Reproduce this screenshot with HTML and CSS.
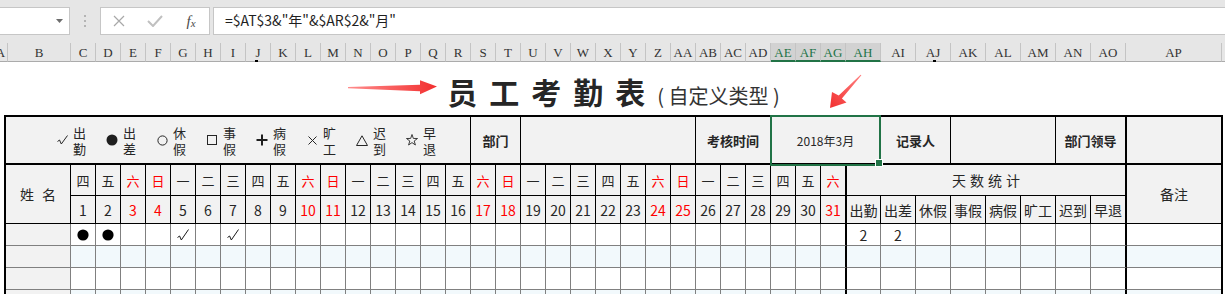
FILE: index.html
```html
<!DOCTYPE html>
<html lang="zh-CN">
	<head>
		<meta charset="UTF-8" />
		<meta name="viewport" content="width=device-width, initial-scale=1.0" />
		<title>员工考勤表</title>
		<link rel="stylesheet" href="styles.css">
	</head>
	<body>
		<div class="toolbar">
			<div class="name-box">
				<svg class="dd" width="7" height="4" viewBox="0 0 7 4"><path d="M0 0 H7 L3.5 4 Z" fill="#6d6d6d" /></svg>
			</div>
			<div class="grip"><i></i><i></i><i></i></div>
			<div class="fx-box">
				<span class="fx-btn"><svg width="12" height="12" viewBox="0 0 12 12"><path d="M1 1 L11 11 M11 1 L1 11" stroke="#a8a8a8" stroke-width="1.2" /></svg></span>
				<span class="fx-btn"><svg width="16" height="12" viewBox="0 0 16 12"><path d="M1 6 L6 11 L15 1" stroke="#c0c0c0" stroke-width="2" fill="none" /></svg></span>
				<span class="fx-btn fx">f<small>x</small></span>
			</div>
			<div class="formula">=$AT$3&amp;"年"&amp;$AR$2&amp;"月"</div>
		</div>

		<div class="col-heads" id="colHeads"></div>

		<div class="sheet">
			<div class="title-row">
				<span class="title">员工考勤表</span>
				<span class="subtitle">( 自定义类型 )</span>
			</div>

			<div class="grid" id="sheetGrid">
				<div class="c lg s17 legend">
					<div class="lg-item">
						<span class="lg-sym"><svg width="11" height="10" viewBox="0 0 11 10"><path d="M0.5 6.5 L2.5 5 L4.3 9 L10.5 0.5" fill="none" stroke="#262626" /></svg></span>
						<span class="lg-text"><b>出</b><b>勤</b></span>
					</div>
					<div class="lg-item">
						<span class="lg-sym"><svg width="12" height="12" viewBox="0 0 12 12"><circle cx="6" cy="6" r="5.5" fill="#1f1f1f" /></svg></span>
						<span class="lg-text"><b>出</b><b>差</b></span>
					</div>
					<div class="lg-item">
						<span class="lg-sym"><svg width="11" height="11" viewBox="0 0 11 11"><circle cx="5.5" cy="5.5" r="4.6" fill="none" stroke="#262626" /></svg></span>
						<span class="lg-text"><b>休</b><b>假</b></span>
					</div>
					<div class="lg-item">
						<span class="lg-sym"><svg width="10" height="10" viewBox="0 0 10 10"><rect x="0.5" y="0.5" width="9" height="9" fill="none" stroke="#262626" /></svg></span>
						<span class="lg-text"><b>事</b><b>假</b></span>
					</div>
					<div class="lg-item">
						<span class="lg-sym"><svg width="12" height="12" viewBox="0 0 12 12"><path d="M6 0.5 V11.5 M0.5 6 H11.5" stroke="#1f1f1f" stroke-width="2" /></svg></span>
						<span class="lg-text"><b>病</b><b>假</b></span>
					</div>
					<div class="lg-item">
						<span class="lg-sym"><svg width="9" height="9" viewBox="0 0 9 9"><path d="M0.5 0.5 L8.5 8.5 M8.5 0.5 L0.5 8.5" stroke="#262626" /></svg></span>
						<span class="lg-text"><b>旷</b><b>工</b></span>
					</div>
					<div class="lg-item">
						<span class="lg-sym"><svg width="12" height="11" viewBox="0 0 12 11"><path d="M6 0.8 L11.5 10.5 H0.5 Z" fill="none" stroke="#262626" /></svg></span>
						<span class="lg-text"><b>迟</b><b>到</b></span>
					</div>
					<div class="lg-item">
						<span class="lg-sym"><svg width="12" height="12" viewBox="0 0 12 12"><path d="M6 0.5 L7.35 4.44 L11.52 4.51 L8.19 7.01 L9.41 10.99 L6 8.6 L2.59 10.99 L3.81 7.01 L0.48 4.51 L4.65 4.44 Z" fill="none" stroke="#262626" stroke-width="0.9" /></svg></span>
						<span class="lg-text"><b>早</b><b>退</b></span>
					</div>
				</div>
				<div class="c lg s2 bold">部门</div>
				<div class="c lg s7"></div>
				<div class="c lg s3 bold">考核时间</div>
				<div class="c lg s4 month">2018年3月</div>
				<div class="c lg s2 bold">记录人</div>
				<div class="c lg s3"></div>
				<div class="c lg s2 bold end">部门领导</div>
				<div class="c lg last"></div>
			</div>

			<div class="sel"></div>

			<svg class="arrows" width="1225" height="60" viewBox="0 0 1225 60">
				<defs>
					<linearGradient id="redH" x1="0" y1="0" x2="1" y2="0">
						<stop offset="0" stop-color="#ff8c8c" />
						<stop offset="1" stop-color="#f22f2f" />
					</linearGradient>
					<linearGradient id="redD" x1="1" y1="0" x2="0" y2="1">
						<stop offset="0" stop-color="#ff8080" />
						<stop offset="1" stop-color="#f22f2f" />
					</linearGradient>
				</defs>
				<polygon points="348,25 420,22.7 420,18.3 437,24.5 420,32.3 420,29.3 348,26.2" fill="url(#redH)" />
				<polygon points="861.4,13.3 841.9,36.6 846.5,40.5 830,46 832,30 838.7,33.6 860.6,12.7" fill="url(#redD)" />
			</svg>
			<i class="tick-mark t1"></i>
			<i class="tick-mark t2"></i>
		</div>

		<script>
			// 列标题
			var cols = [['A', 'w8'], ['B', 'w63']];
			var letters = 'CDEFGHIJKLMNOPQRSTUVWXYZ'.split('').concat(['AA', 'AB', 'AC', 'AD', 'AE', 'AF', 'AG']);
			letters.forEach(function (l) { cols.push([l, '']); });
			['AH', 'AI', 'AJ', 'AK', 'AL', 'AM', 'AN', 'AO'].forEach(function (l) { cols.push([l, 'w35']); });
			cols.push(['AP', 'w96']);
			cols.push(['AQ', 'w96']);
			var heads = document.getElementById('colHeads');
			cols.forEach(function (c) {
				var el = document.createElement('div');
				var on = ['AE', 'AF', 'AG', 'AH'].indexOf(c[0]) > -1;
				el.className = 'ch ' + c[1] + (on ? ' on' : '');
				el.textContent = c[0];
				heads.appendChild(el);
			});

			// 表格
			var grid = document.getElementById('sheetGrid');
			function cell(cls, html) {
				var el = document.createElement('div');
				el.className = 'c ' + cls;
				el.innerHTML = html || '';
				grid.appendChild(el);
			}
			var wk = ['日', '一', '二', '三', '四', '五', '六'];
			var stats = ['出勤', '出差', '休假', '事假', '病假', '旷工', '迟到', '早退'];
			var dot = '<svg width="12" height="12" viewBox="0 0 12 12"><circle cx="6" cy="6" r="5.6" fill="#000"/></svg>';
			var tick = '<svg width="12" height="12" viewBox="0 0 12 12"><path d="M0.5 8.5 L2.6 7 L4.3 11 L11.5 0.5" fill="none" stroke="#1a1a1a"/></svg>';
			var d, w;

			// 星期行
			cell('r2 name-h', '姓名');
			for (d = 1; d <= 31; d++) {
				w = (d + 3) % 7;
				cell('wk' + (w == 0 || w == 6 ? ' red' : '') + (d == 31 ? ' end' : ''), wk[w]);
			}
			cell('s8 end sum-h', '天数统计');
			cell('r2 last', '备注');

			// 日期行
			for (d = 1; d <= 31; d++) {
				w = (d + 3) % 7;
				cell('num' + (w == 0 || w == 6 ? ' red' : '') + (d == 31 ? ' end' : ''), d);
			}
			stats.forEach(function (s, i) { cell(i == 7 ? 'end' : '', s); });

			// 数据行
			var marks = { 1: dot, 2: dot, 5: tick, 7: tick };
			for (var r = 0; r < 4; r++) {
				var alt = r % 2 ? ' alt' : '';
				cell('d nm');
				for (d = 1; d <= 31; d++) {
					cell('d' + alt + (d == 31 ? ' end' : ''), r == 0 ? marks[d] : '');
				}
				for (var i = 0; i < 8; i++) {
					cell('d' + alt + (i == 7 ? ' end' : ''), r == 0 && i < 2 ? '2' : '');
				}
				cell('d last' + alt);
			}
		</script>
	</body>
</html>
```

FILE: styles.css
```css
* {
	box-sizing: border-box;
}
body {
	margin: 0;
	width: 1225px;
	height: 294px;
	overflow: hidden;
	background: #fff;
	font-family: "Noto Sans CJK SC", "Noto Sans", sans-serif;
	color: #262626;
}

/* 编辑栏 */
.toolbar {
	height: 43px;
	background: #e6e6e6;
	display: flex;
	padding-top: 7px;
}
.name-box {
	position: relative;
	width: 70px;
	height: 28px;
	background: #fff;
	border: 1px solid #c6c6c6;
	border-left: none;
}
.name-box .dd {
	position: absolute;
	left: 56px;
	top: 11px;
}
.grip {
	width: 30px;
	height: 28px;
	display: flex;
	flex-direction: column;
	align-items: center;
	justify-content: center;
	gap: 3px;
}
.grip i {
	width: 2px;
	height: 2px;
	background: #b4b4b4;
}
.fx-box {
	width: 110px;
	height: 28px;
	background: #fff;
	border: 1px solid #c6c6c6;
	display: flex;
}
.fx-btn {
	width: 36px;
	display: flex;
	align-items: center;
	justify-content: center;
}
.fx {
	font-family: "Liberation Serif", serif;
	font-style: italic;
	font-size: 15px;
	color: #4a4a4a;
}
.fx small {
	font-size: 11px;
	margin-top: 3px;
}
.formula {
	flex: 1;
	margin-left: 3px;
	height: 28px;
	background: #fff;
	border: 1px solid #c6c6c6;
	border-right: none;
	padding-left: 11px;
	font-size: 14px;
	line-height: 25px;
	color: #1f1f1f;
}

/* 列标题 */
.col-heads {
	display: flex;
	height: 19px;
	background: #e6e6e6;
	font-family: "Liberation Serif", serif;
	font-size: 13px;
	color: #333;
}
.ch {
	flex: none;
	width: 25px;
	height: 19px;
	border-right: 1px solid #c4c4c4;
	border-bottom: 1px solid #ababab;
	text-align: center;
	line-height: 19px;
	overflow: hidden;
	white-space: nowrap;
}
.ch.w8 {
	width: 8px;
	text-indent: -6px;
}
.ch.w63 {
	width: 63px;
}
.ch.w35 {
	width: 35px;
}
.ch.w96 {
	width: 96px;
}
.ch.on {
	background: #d2d2d2;
	color: #217346;
	border-bottom: 2px solid #217346;
}

/* 表格 */
.sheet {
	position: relative;
}
.title-row {
	width: 1219px;
	height: 53px;
	margin-left: 4px;
	display: flex;
	justify-content: center;
	align-items: baseline;
	padding-top: 12px;
}
.title {
	font-size: 30px;
	font-weight: 700;
	letter-spacing: 12px;
	line-height: 34px;
	color: #262626;
}
.subtitle {
	font-size: 20px;
	line-height: 24px;
	color: #333;
}
.grid {
	display: grid;
	width: 1219px;
	margin-left: 4px;
	grid-template-columns: 65px repeat(30, 25px) 26px 34px repeat(6, 35px) 36px 94px;
	grid-template-rows: 48px 31px 28px repeat(4, 22px);
	border: 2px solid #000;
	border-bottom: none;
	font-size: 14px;
}
.c {
	display: flex;
	align-items: center;
	justify-content: center;
	border-right: 1px solid #000;
	border-bottom: 1px solid #000;
	background: #f2f2f2;
	white-space: nowrap;
}
.lg {
	border-bottom-width: 2px;
}
.s2 { grid-column: span 2; }
.s3 { grid-column: span 3; }
.s4 { grid-column: span 4; }
.s7 { grid-column: span 7; }
.s8 { grid-column: span 8; }
.s17 { grid-column: span 17; }
.r2 {
	grid-row: span 2;
}
.end {
	border-right-width: 2px;
}
.last {
	border-right: none;
}
.bold {
	font-size: 13px;
	font-weight: 700;
}
.month {
	font-size: 12px;
}
.legend {
	justify-content: flex-start;
	padding-left: 49px;
}
.lg-item {
	flex: none;
	width: 50px;
	display: flex;
	align-items: center;
}
.lg-sym {
	width: 14px;
	display: flex;
	justify-content: center;
}
.lg-text {
	margin-left: 4px;
	display: flex;
	flex-direction: column;
	gap: 3px;
	font-size: 13px;
}
.lg-text b {
	font-weight: 400;
	height: 13px;
	line-height: 13px;
}
.name-h {
	letter-spacing: 8px;
	padding-left: 8px;
}
.sum-h {
	letter-spacing: 4px;
	padding-left: 4px;
}
.wk {
	font-size: 13px;
}
.red {
	color: #ff0000;
}
.d {
	background: #fff;
	border-right-color: #808080;
	border-bottom-color: #808080;
}
.d.alt {
	background: #f2f9fc;
}
.d.nm {
	background: #f2f2f2;
}
.d.end {
	border-right-color: #000;
}

/* 选中单元格 */
.sel {
	position: absolute;
	left: 770px;
	top: 53px;
	width: 111px;
	height: 51px;
	border: 2px solid #217346;
}
.sel::after {
	content: '';
	position: absolute;
	right: -4px;
	bottom: -3px;
	width: 6px;
	height: 6px;
	background: #217346;
	border: 1px solid #fff;
}
.arrows {
	position: absolute;
	left: 0;
	top: 0;
	pointer-events: none;
}
.tick-mark {
	position: absolute;
	top: -2px;
	width: 3px;
	height: 2px;
	background: #000;
}
.t1 {
	left: 255px;
}
.t2 {
	left: 933px;
}
```
